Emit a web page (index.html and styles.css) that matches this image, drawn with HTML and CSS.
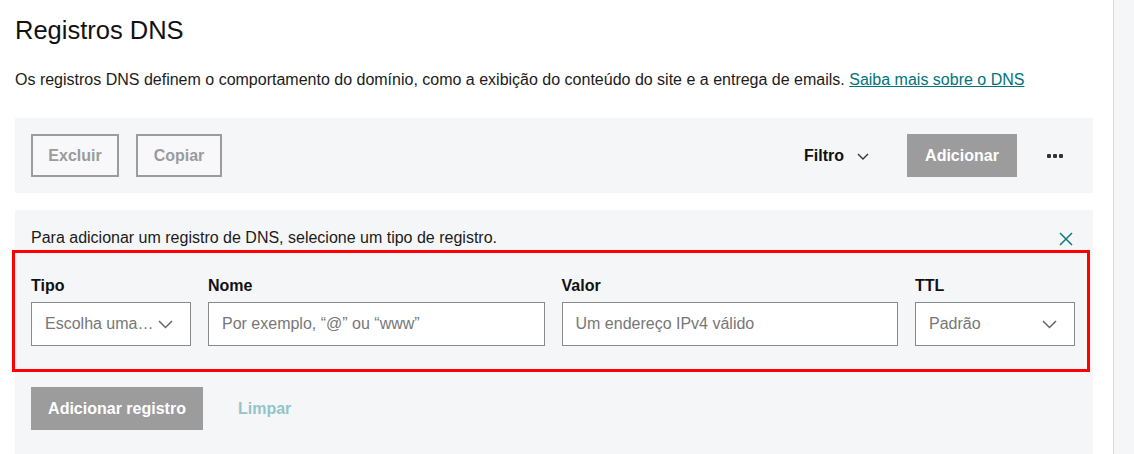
FILE: index.html
```html
<!DOCTYPE html>
<html lang="pt-BR">
<head>
<meta charset="utf-8">
<title>Registros DNS</title>
<link rel="stylesheet" href="styles.css">
</head>
<body>
<div class="layout">
  <main class="main">
    <h1 class="title">Registros DNS</h1>
    <p class="intro">Os registros DNS definem o comportamento do domínio, como a exibição do conteúdo do site e a entrega de emails. <a class="link" href="#">Saiba mais sobre o DNS</a></p>

    <div class="toolbar">
      <div class="toolbar-left">
        <button class="btn-outline btn-excluir">Excluir</button>
        <button class="btn-outline btn-copiar">Copiar</button>
      </div>
      <div class="toolbar-right">
        <button class="filter">Filtro
          <svg class="filter-chev" width="12" height="7" viewBox="0 0 12 7"><path d="M1 1l5 5 5-5" fill="none" stroke="#333" stroke-width="1.4"/></svg>
        </button>
        <button class="btn-solid">Adicionar</button>
        <button class="more"><span class="dot"></span><span class="dot"></span><span class="dot"></span></button>
      </div>
    </div>

    <section class="panel">
      <div class="panel-head">
        <span class="panel-text">Para adicionar um registro de DNS, selecione um tipo de registro.</span>
        <svg class="close" width="14" height="14" viewBox="0 0 14 14"><path d="M1 1l12 12M13 1L1 13" fill="none" stroke="#0a7a80" stroke-width="1.5"/></svg>
      </div>

      <div class="form-wrap">
        <div class="form-row">
          <div class="field">
            <label class="label">Tipo</label>
            <div class="select">
              <span class="ph">Escolha uma…</span>
              <svg class="chev" width="15" height="9" viewBox="0 0 15 9"><path d="M1 1l6.5 6.5L14 1" fill="none" stroke="#666" stroke-width="1.5"/></svg>
            </div>
          </div>
          <div class="field">
            <label class="label">Nome</label>
            <div class="input"><span class="ph">Por exemplo, “@” ou “www”</span></div>
          </div>
          <div class="field">
            <label class="label">Valor</label>
            <div class="input"><span class="ph">Um endereço IPv4 válido</span></div>
          </div>
          <div class="field">
            <label class="label">TTL</label>
            <div class="select">
              <span class="ph">Padrão</span>
              <svg class="chev" width="15" height="9" viewBox="0 0 15 9"><path d="M1 1l6.5 6.5L14 1" fill="none" stroke="#666" stroke-width="1.5"/></svg>
            </div>
          </div>
        </div>
        <div class="highlight"></div>
      </div>

      <div class="actions">
        <button class="btn-solid btn-add">Adicionar registro</button>
        <button class="btn-link">Limpar</button>
      </div>
    </section>
  </main>
  <aside class="side"></aside>
</div>
</body>
</html>
```

FILE: styles.css
```css
* { box-sizing: border-box; }
html, body { margin: 0; padding: 0; background: #fff; }
body {
  font-family: "Liberation Sans", Arial, sans-serif;
  color: #1b1b1b;
  height: 454px;
  overflow: hidden;
}
.layout {
  display: flex;
  height: 454px;
}
.main {
  width: 1113px;
  padding: 0 20px 0 15px;
}
.side {
  flex: 1;
  border-left: 1px solid #d8d9db;
  background: #f5f6f8;
}
.title {
  margin: 0;
  padding-top: 15px;
  font-size: 25.5px;
  font-weight: 400;
  line-height: 30px;
  color: #111;
}
.intro {
  margin: 25px 0 0;
  font-size: 16px;
  line-height: 20px;
  color: #1b1b1b;
}
.link {
  color: #00737a;
  text-decoration: underline;
}
.toolbar {
  margin-top: 28px;
  height: 75px;
  background: #f5f6f8;
  display: flex;
  align-items: center;
  justify-content: space-between;
  padding: 0 16px;
}
.toolbar-left, .toolbar-right {
  display: flex;
  align-items: center;
}
.toolbar-left { gap: 17px; }
button {
  font-family: inherit;
  cursor: pointer;
}
.btn-outline {
  height: 43px;
  padding: 0;
  border: 2px solid #9c9c9c;
  background: #f8f8fa;
  color: #9b9b9b;
  font-size: 16px;
  font-weight: 700;
}
.btn-excluir { width: 88px; }
.btn-copiar { width: 86px; }
.filter {
  display: flex;
  align-items: center;
  gap: 13px;
  background: none;
  border: none;
  padding: 0;
  font-size: 16px;
  font-weight: 700;
  color: #111;
  margin-right: 38px;
}
.filter-chev { margin-top: 2px; }
.btn-solid {
  height: 43px;
  border: none;
  background: #9c9c9d;
  color: #fff;
  font-size: 16px;
  font-weight: 700;
  padding: 0;
  width: 110px;
}
.more {
  display: flex;
  gap: 2px;
  background: none;
  border: none;
  padding: 0;
  margin-left: 30px;
  margin-right: 14px;
}
.dot {
  width: 4px;
  height: 4px;
  border-radius: 1px;
  background: #333;
}
.panel {
  margin-top: 17px;
  background: #f5f6f8;
  padding: 18px 18px 30px 16px;
  height: 260px;
}
.panel-head {
  display: flex;
  align-items: center;
  justify-content: space-between;
  height: 20px;
  padding-right: 2px;
}
.panel-text {
  font-size: 16px;
  color: #1b1b1b;
}
.close { margin-top: 2px; }
.form-wrap {
  position: relative;
  margin-top: 28px;
}
.form-row {
  display: grid;
  grid-template-columns: 160px 1fr 1fr 160px;
  column-gap: 17px;
}
.field {
  display: flex;
  flex-direction: column;
}
.label {
  font-size: 16px;
  font-weight: 700;
  line-height: 20px;
  color: #111;
  margin-bottom: 6px;
}
.input, .select {
  height: 44px;
  border: 1px solid #8a8a8a;
  background: #fff;
  display: flex;
  align-items: center;
  padding: 0 13px;
  font-size: 16px;
}
.select {
  justify-content: space-between;
  padding-right: 17px;
}
.ph { color: #777; white-space: nowrap; }
.chev { flex: none; }
.highlight {
  position: absolute;
  left: -19px;
  right: -15px;
  top: -26px;
  bottom: -26px;
  border: 3px solid #ff0000;
  pointer-events: none;
}
.actions {
  margin-top: 41px;
  display: flex;
  align-items: center;
  gap: 35px;
}
.btn-add {
  width: 172px;
}
.btn-link {
  background: none;
  border: none;
  padding: 0;
  font-size: 16px;
  font-weight: 700;
  color: #92c4c9;
}
```
